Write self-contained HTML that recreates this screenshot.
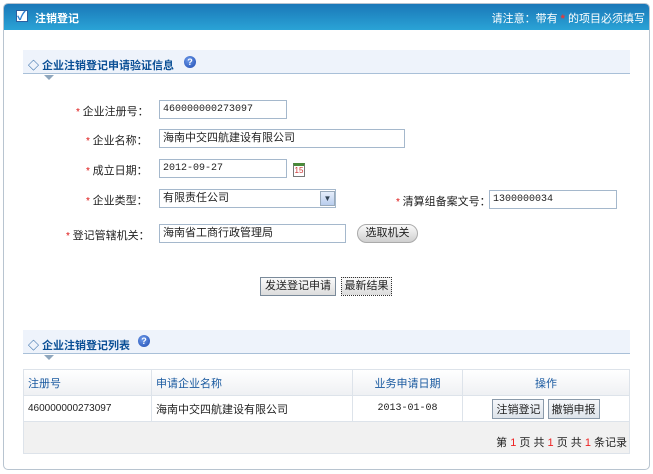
<!DOCTYPE html>
<html><head><meta charset="utf-8"><style>
*{margin:0;padding:0;box-sizing:border-box}
body{width:653px;height:474px;background:#fff;font-family:"Liberation Sans","Noto Sans CJK SC",sans-serif;font-size:11px;color:#222;position:relative;overflow:hidden}
.a{position:absolute}
.frame{left:3px;top:3px;width:647px;height:467px;border:1px solid #b8c4d0;border-radius:5px}
.hdr{left:4px;top:4px;width:645px;height:26px;background:linear-gradient(#1a78b8,#2aa3d6);border-radius:4px 4px 0 0}
.sec{left:23px;width:607px;height:24px;background:#eef3fb;border-bottom:1px solid #a9c0d8}
.st{color:#0a4f95;font-weight:bold;font-size:11px}
.tri{width:0;height:0;border-left:5px solid transparent;border-right:5px solid transparent;border-top:5px solid #8ea6bd}
.help{width:12px;height:12px;border-radius:50%;background:radial-gradient(circle at 40% 35%,#6e9bea,#1c49b0);color:#fff;font-size:9px;font-weight:bold;text-align:center;line-height:12px}
.inp{border:1px solid #a5b8cc;height:19px;font-size:11px;line-height:17px;padding-left:3px;background:#fff}
.mono{font-family:"Liberation Mono",monospace;font-size:10px}
.lbl{font-size:11px;color:#222}
.star{color:#d11;font-size:10px}
.btn{border:1px solid #7a8a9a;background:linear-gradient(#fbfbfb,#dcdcdc);font-size:11px;text-align:center;line-height:17px;height:19px}
table{border-collapse:collapse;font-size:11px}
td{border:1px solid #dde3ea;height:26px}
</style></head><body>
<div class="a frame"></div>
<div class="a hdr"></div>
<div class="a" style="left:16px;top:10px;width:12px;height:12px;background:#fff;border:1px solid #2b5fa0"><span style="position:absolute;left:0;top:-4px;color:#2b7ed0;font-weight:bold;font-size:12px">✓</span></div>
<div class="a" style="left:35px;top:10px;color:#fff;font-weight:bold;font-size:11px">注销登记</div>
<div class="a" style="right:8px;top:10px;color:#fff;font-size:11px">请注意：带有 <b style="color:#e33">*</b> 的项目必须填写</div>

<div class="a sec" style="top:50px"></div>
<div class="a st" style="left:28px;top:57px"><span style="font-weight:normal">◇</span> 企业注销登记申请验证信息</div>
<div class="a help" style="left:184px;top:56px">?</div>
<div class="a tri" style="left:44px;top:75px"></div>

<div class="a lbl" style="left:76px;top:103px"><span class="star">* </span>企业注册号：</div>
<div class="a inp mono" style="left:159px;top:100px;width:128px">460000000273097</div>
<div class="a lbl" style="left:86px;top:132px"><span class="star">* </span>企业名称：</div>
<div class="a inp" style="left:159px;top:129px;width:246px">海南中交四航建设有限公司</div>
<div class="a lbl" style="left:86px;top:162px"><span class="star">* </span>成立日期：</div>
<div class="a inp mono" style="left:159px;top:159px;width:128px">2012-09-27</div>
<div class="a" style="left:293px;top:163px;width:12px;height:14px;border:1px solid #777;background:#fff;font-size:8px;color:#c33;text-align:center;line-height:10px;border-top:3px solid #4a8a3a">15</div>
<div class="a lbl" style="left:86px;top:192px"><span class="star">* </span>企业类型：</div>
<div class="a inp" style="left:159px;top:189px;width:177px">有限责任公司</div>
<div class="a" style="left:320px;top:191px;width:15px;height:15px;background:linear-gradient(#e6eefb,#b9cdee);border:1px solid #9ab;color:#345;font-size:8px;text-align:center;line-height:13px">▼</div>
<div class="a lbl" style="left:396px;top:193px"><span class="star">* </span>清算组备案文号：</div>
<div class="a inp mono" style="left:489px;top:190px;width:128px">1300000034</div>
<div class="a lbl" style="left:66px;top:227px"><span class="star">* </span>登记管辖机关：</div>
<div class="a inp" style="left:159px;top:224px;width:187px">海南省工商行政管理局</div>
<div class="a" style="left:357px;top:224px;width:61px;height:19px;border-radius:10px;background:linear-gradient(#fafafa,#cfcfcf);border:1px solid #aaa;font-size:11px;text-align:center;line-height:17px">选取机关</div>

<div class="a btn" style="left:260px;top:277px;width:76px">发送登记申请</div>
<div class="a btn" style="left:341px;top:277px;width:51px;border:1px dotted #333">最新结果</div>

<div class="a sec" style="top:330px"></div>
<div class="a st" style="left:28px;top:337px"><span style="font-weight:normal">◇</span> 企业注销登记列表</div>
<div class="a help" style="left:138px;top:335px">?</div>
<div class="a tri" style="left:44px;top:355px"></div>

<table class="a" style="left:23px;top:369px;width:607px">
<tr style="background:linear-gradient(#fff,#eef0f3);color:#1a5aa0"><td style="width:128px;padding-left:4px">注册号</td><td style="width:201px;padding-left:4px">申请企业名称</td><td style="width:110px;text-align:center">业务申请日期</td><td style="text-align:center">操作</td></tr>
<tr style="height:25px"><td style="padding-left:4px;font-size:10px">460000000273097</td><td style="padding-left:4px">海南中交四航建设有限公司</td><td style="text-align:center;font-family:'Liberation Mono',monospace;font-size:10px">2013-01-08</td><td style="text-align:center"><span style="display:inline-block;border:1px solid #8a9aaa;background:linear-gradient(#f5f7fa,#dde3ea);padding:1px 3px;font-size:11px">注销登记</span> <span style="display:inline-block;border:1px solid #8a9aaa;background:linear-gradient(#f5f7fa,#dde3ea);padding:1px 3px;font-size:11px">撤销申报</span></td></tr>
<tr style="background:#f1f1f1"><td colspan="4" style="height:32px;text-align:right;padding-right:2px;padding-top:8px;font-size:11px">第 <span style="color:#e22">1</span> 页 共 <span style="color:#e22">1</span> 页 共 <span style="color:#e22">1</span> 条记录</td></tr>
</table>
</body></html>
